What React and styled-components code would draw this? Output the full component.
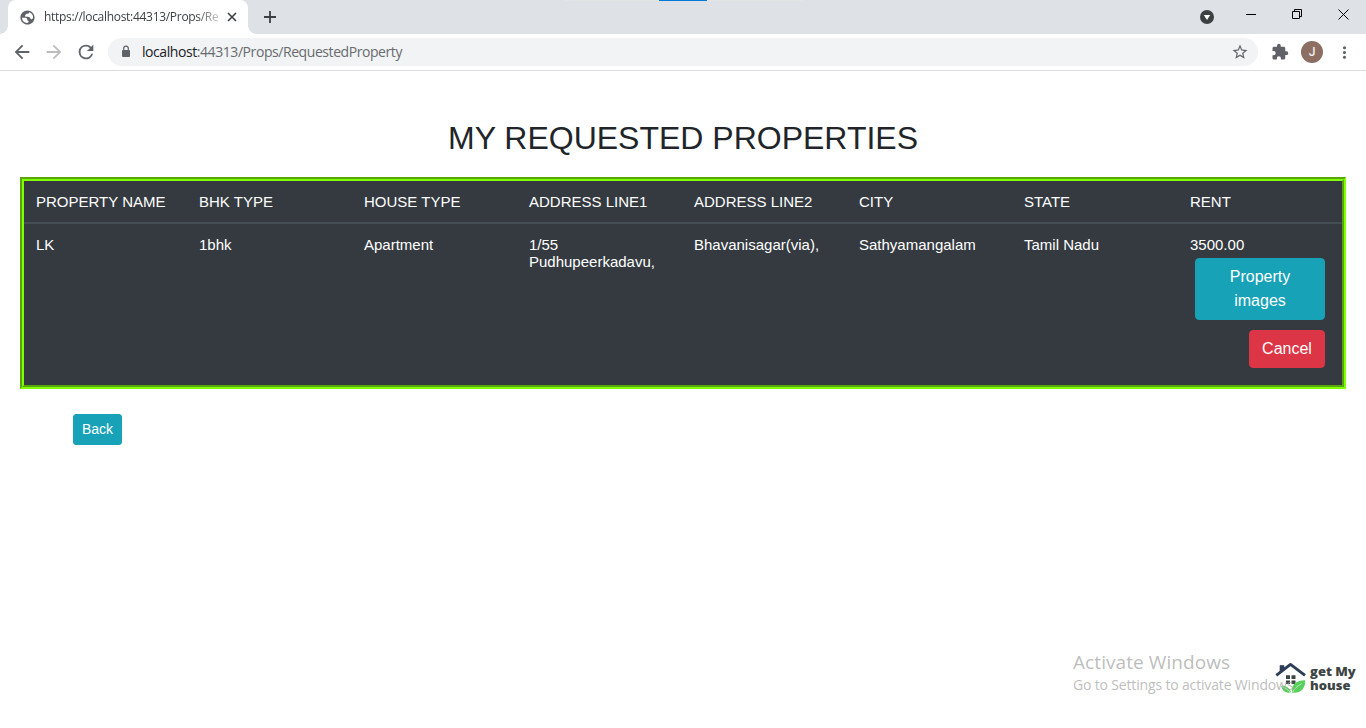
import React from "react";
import styled, { createGlobalStyle } from "styled-components";

const Global = createGlobalStyle`
  * { box-sizing: border-box; }
  html, body { margin: 0; background: #fff; }
  body { font-family: "Liberation Sans", Arial, sans-serif; color: #212529; overflow: hidden; }
  svg { display: block; flex: none; }
`;

const Window = styled.div`
  position: relative;
  width: 1366px;
  height: 728px;
  display: flex;
  flex-direction: column;
  overflow: hidden;
  background: #fff;
`;

const TabStrip = styled.header`
  position: relative;
  display: flex;
  height: 34px;
  background: #dee1e6;
  padding-left: 8px;
`;

const DragHint = styled.div`
  position: absolute;
  top: 0;
  left: 563px;
  width: 240px;
  height: 1px;
  background: #e3e4e6;
  &::after {
    content: "";
    position: absolute;
    left: 96px;
    width: 48px;
    height: 1px;
    background: #0078d7;
  }
`;

const Tab = styled.div`
  position: relative;
  display: flex;
  align-items: center;
  width: 240px;
  height: 34px;
  padding: 0 9px 0 11px;
  background: #fff;
  border-radius: 8px 8px 0 0;
  &::before, &::after {
    content: "";
    position: absolute;
    bottom: 0;
    width: 8px;
    height: 8px;
  }
  &::before { left: -8px; background: radial-gradient(circle at 0 0, transparent 7.5px, #fff 8px); }
  &::after { right: -8px; background: radial-gradient(circle at 100% 0, transparent 7.5px, #fff 8px); }
`;

const TabTitle = styled.span`
  margin-left: 8px;
  white-space: nowrap;
  font: 12px/16px "Open Sans", sans-serif;
  letter-spacing: -0.3px;
  color: #3c4043;
  mask-image: linear-gradient(to right, #000 152px, rgba(0, 0, 0, 0.25) 175px);
`;

const TabClose = styled.svg`
  margin-left: auto;
`;

const NewTab = styled.div`
  display: flex;
  align-items: center;
  margin-left: 15px;
`;

const WindowControls = styled.div`
  display: flex;
  margin-left: auto;
`;

const Control = styled.div`
  display: flex;
  justify-content: center;
  width: ${(p) => p.$w || 46}px;
  padding-top: ${(p) => p.$top || 9}px;
`;

const Toolbar = styled.div`
  display: flex;
  align-items: center;
  height: 37px;
  padding-left: 11px;
  background: #fff;
  border-bottom: 1px solid #dadce0;
`;

const NavIcons = styled.div`
  display: flex;
  gap: 10px;
  margin-right: 11px;
`;

const Omnibox = styled.div`
  display: flex;
  align-items: center;
  width: 1150px;
  height: 28px;
  padding: 0 9px 0 12px;
  background: #f1f3f4;
  border-radius: 14px;
`;

const Url = styled.span`
  flex: 1;
  margin-left: 10px;
  font: 14px/20px "Open Sans", sans-serif;
  letter-spacing: -0.43px;
  color: #686b6f;
  b { font-weight: 400; color: #202124; }
`;

const Extras = styled.div`
  display: flex;
  align-items: center;
  margin-left: 13px;
`;

const Avatar = styled.div`
  width: 22px;
  height: 22px;
  margin: 0 12px 0 12px;
  border-radius: 50%;
  background: #8d6e63;
  color: #f3efed;
  font: 500 12px/22px Roboto, sans-serif;
  text-align: center;
`;

const Page = styled.main`
  display: flex;
  flex-direction: column;
  align-items: flex-start;
  padding: 48px 20px 0;
`;

const Title = styled.h1`
  align-self: center;
  margin: 0 0 20px;
  font-size: 32px;
  font-weight: 400;
  line-height: 38px;
`;

const Frame = styled.div`
  width: 1326px;
  border: 2px solid;
  border-color: #59a60c #7fff00 #7fff00 #59a60c;
`;

const Inset = styled.div`
  height: 208px;
  border: 2px solid;
  border-color: #7fff00 #59a60c #59a60c #7fff00;
  background: #343a40;
`;

const Row = styled.div`
  display: grid;
  grid-template-columns: 163px repeat(5, 165px) 166px 164px;
  font-size: 15px;
  line-height: 17px;
  color: #fff;
`;

const HeadRow = styled(Row)`
  height: 43px;
  border-bottom: 2px solid #454d55;
`;

const Cell = styled.div`
  padding: 12px 0 0 12px;
`;

const Actions = styled.div`
  display: flex;
  flex-direction: column;
  align-items: flex-end;
  gap: 10px;
  margin-top: 5px;
  padding-right: 17px;
`;

const Button = styled.button`
  display: block;
  width: ${(p) => p.$w}px;
  padding: ${(p) => (p.$small ? "4px 8px" : "6px 12px")};
  border: 1px solid ${(p) => (p.$danger ? "#dc3545" : "#17a2b8")};
  border-radius: ${(p) => (p.$small ? 3 : 4)}px;
  background: ${(p) => (p.$danger ? "#dc3545" : "#17a2b8")};
  color: #fff;
  font-family: inherit;
  font-size: ${(p) => (p.$small ? 14 : 16)}px;
  line-height: ${(p) => (p.$small ? 21 : 24)}px;
`;

const BackRow = styled.div`
  padding: 25px 0 0 53px;
`;

const Watermark = styled.div`
  position: absolute;
  left: 1073px;
  top: 649px;
  font-family: "Open Sans", sans-serif;
  color: rgba(160, 160, 160, 0.7);
  white-space: nowrap;
`;

const MarkTitle = styled.div`
  font-size: 19px;
  line-height: 26px;
  letter-spacing: 0.08px;
`;

const MarkText = styled.div`
  width: max-content;
  font-size: 14px;
  line-height: 20px;
  letter-spacing: -0.16px;
`;

const Brand = styled.div`
  position: absolute;
  left: 1274px;
  top: 661px;
  display: flex;
`;

const BrandText = styled.div`
  display: flex;
  flex-direction: column;
  margin: 3px 0 0 2px;
  font: 800 13px/14px "Open Sans", sans-serif;
  color: #3c4444;
  white-space: nowrap;
`;

const headings = ["PROPERTY NAME", "BHK TYPE", "HOUSE TYPE", "ADDRESS LINE1", "ADDRESS LINE2", "CITY", "STATE", "RENT"];
const values = ["LK", "1bhk", "Apartment", "1/55 Pudhupeerkadavu,", "Bhavanisagar(via),", "Sathyamangalam", "Tamil Nadu"];

const Glyph = ({ d, size = 16, color = "#5f6368" }) => (
  <svg width={size} height={size} viewBox="0 0 24 24" fill={color}>
    <path d={d} />
  </svg>
);

const icons = {
  globe: "M12 2C6.480 2 2 6.480 2 12s4.480 10 10 10 10-4.480 10-10S17.520 2 12 2zM4.200 12.500h5c1.500 0 2.300 1 2.300 2.300 0 1.200 1 1.700 2 1.700v2.300l-2 1A8 8 0 0 1 4.200 12.500zM19.800 13l-1.300 1c-1 .7-2 .4-2.500-.5l-1-1.700c-.6-.8-1.500-1-2.500-1H10c-1.500 0-2-1.500-1-2.500l1-1c.7-.6 1.500-.5 2.300-.5 1.500 0 1.700-1 2.200-2.200A8 8 0 0 1 19.800 13z",
  back: "M20 11H7.830l5.590-5.590L12 4l-8 8 8 8 1.410-1.410L7.830 13H20v-2z",
  forward: "M12 4l-1.410 1.410L16.170 11H4v2h12.170l-5.580 5.590L12 20l8-8z",
  reload: "M17.650 6.350A7.958 7.958 0 0 0 12 4a8 8 0 1 0 7.730 10h-2.080A6 6 0 1 1 12 6c1.660 0 3.140.69 4.220 1.780L13 11h7V4l-2.350 2.350z",
  star: "M22 9.240l-7.190-.62L12 2 9.190 8.630 2 9.240l5.460 4.730L5.820 21 12 17.270 18.180 21l-1.630-7.030L22 9.240zM12 15.400l-3.760 2.270 1-4.280-3.320-2.880 4.380-.38L12 6.100l1.710 4.040 4.380.38-3.320 2.880 1 4.280L12 15.400z",
  puzzle: "M20.500 11H19V7c0-1.100-.9-2-2-2h-4V3.500a2.500 2.500 0 0 0-5 0V5H4c-1.100 0-1.990.9-1.990 2v3.800H3.500c1.490 0 2.700 1.210 2.700 2.700s-1.210 2.700-2.700 2.700H2V20c0 1.100.9 2 2 2h3.800v-1.500c0-1.490 1.210-2.700 2.700-2.700s2.700 1.210 2.700 2.700V22H17c1.100 0 2-.9 2-2v-4h1.500a2.500 2.500 0 0 0 0-5z",
  more: "M12 8a2 2 0 1 0 0-4 2 2 0 0 0 0 4zm0 2a2 2 0 1 0 0 4 2 2 0 0 0 0-4zm0 6a2 2 0 1 0 0 4 2 2 0 0 0 0-4z",
};

const Lock = () => (
  <svg width="12" height="14" viewBox="0 0 12 14">
    <rect x="2" y="5" width="8" height="7" rx="1" fill="#5f6368" />
    <path d="M3.700 5V3.500a2.300 2.300 0 0 1 4.600 0V5" fill="none" stroke="#5f6368" strokeWidth="1.200" />
  </svg>
);

const HouseLogo = () => (
  <svg width="34" height="34" viewBox="0 0 34 34">
    <path d="M6 11V4.500h4v4z" fill="#2c3e57" stroke="#2c3e57" strokeWidth=".6" />
    <path d="M2.300 14.300L16.500 3.400 31 14.300" fill="none" stroke="#2c3e57" strokeWidth="2.900" strokeLinejoin="round" />
    <path d="M12 14.300h4v3.700h-4zM17.500 14.300h4v3.700h-4zM12 19.400h4v3.600h-4zM17.500 19.400h4v3.600h-4z" fill="#3c4444" />
    <path d="M7 24.800c5-.3 9 2.200 10 6.500-4.500 1.400-8.500-.8-10-6.500z" fill="#58d05c" />
    <path d="M18.300 31.700c-1.600-7 3-12.300 13-12.400.1 8.500-5 13.500-13 12.400z" fill="#58d05c" />
    <path d="M18.500 31.500c2-4 5-6.500 9-8.800M8 25.800c3.500 1 6 3 8 5" fill="none" stroke="#c5efc5" strokeWidth=".9" />
  </svg>
);

export default function App() {
  return (
    <Window>
      <Global />
      <TabStrip>
        <DragHint />
        <Tab>
          <Glyph d={icons.globe} size={17} />
          <TabTitle>https://localhost:44313/Props/Re</TabTitle>
          <TabClose width="14" height="14" viewBox="0 0 14 14" fill="none" stroke="#3c4043" strokeWidth="1.6">
            <path d="M3 3l8 8M11 3l-8 8" />
          </TabClose>
        </Tab>
        <NewTab>
          <svg width="14" height="14" viewBox="0 0 14 14" fill="none" stroke="#3c4043" strokeWidth="1.8">
            <path d="M1 7h12M7 1v12" />
          </svg>
        </NewTab>
        <WindowControls>
          <Control $w={42} $top={10}>
            <svg width="14" height="14" viewBox="0 0 14 14">
              <circle cx="7" cy="7" r="7" fill="#3c4043" />
              <path d="M3.800 5h6.400L7 10z" fill="#fff" />
            </svg>
          </Control>
          <Control>
            <svg width="10" height="10" stroke="#000"><path d="M0 5.500h10" /></svg>
          </Control>
          <Control>
            <svg width="10" height="10" fill="none" stroke="#000"><path d="M.5 2.500h7v7h-7zM2.500 2.500v-2h7v7h-2" /></svg>
          </Control>
          <Control>
            <svg width="11" height="11" stroke="#000"><path d="M.5.5l10 10M10.500.5l-10 10" /></svg>
          </Control>
        </WindowControls>
      </TabStrip>
      <Toolbar>
        <NavIcons>
          <Glyph d={icons.back} size={22} />
          <Glyph d={icons.forward} size={22} color="#babcbe" />
          <Glyph d={icons.reload} size={22} />
        </NavIcons>
        <Omnibox>
          <Lock />
          <Url><b>localhost</b>:44313/Props/RequestedProperty</Url>
          <Glyph d={icons.star} size={18} />
        </Omnibox>
        <Extras>
          <Glyph d={icons.puzzle} size={18} />
          <Avatar>J</Avatar>
          <Glyph d={icons.more} size={19} />
        </Extras>
      </Toolbar>
      <Page>
        <Title>MY REQUESTED PROPERTIES</Title>
        <Frame>
          <Inset>
            <HeadRow>
              {headings.map((text) => <Cell key={text}>{text}</Cell>)}
            </HeadRow>
            <Row>
              {values.map((text) => <Cell key={text}>{text}</Cell>)}
              <Cell>
                3500.00
                <Actions>
                  <Button $w={130}>Property images</Button>
                  <Button $w={76} $danger>Cancel</Button>
                </Actions>
              </Cell>
            </Row>
          </Inset>
        </Frame>
        <BackRow>
          <Button $w={49} $small>Back</Button>
        </BackRow>
      </Page>
      <Brand>
        <HouseLogo />
        <BrandText>
          <span>get My</span>
          <span>house</span>
        </BrandText>
      </Brand>
      <Watermark>
        <MarkTitle>Activate Windows</MarkTitle>
        <MarkText>Go to Settings to activate Windows.</MarkText>
      </Watermark>
    </Window>
  );
}
